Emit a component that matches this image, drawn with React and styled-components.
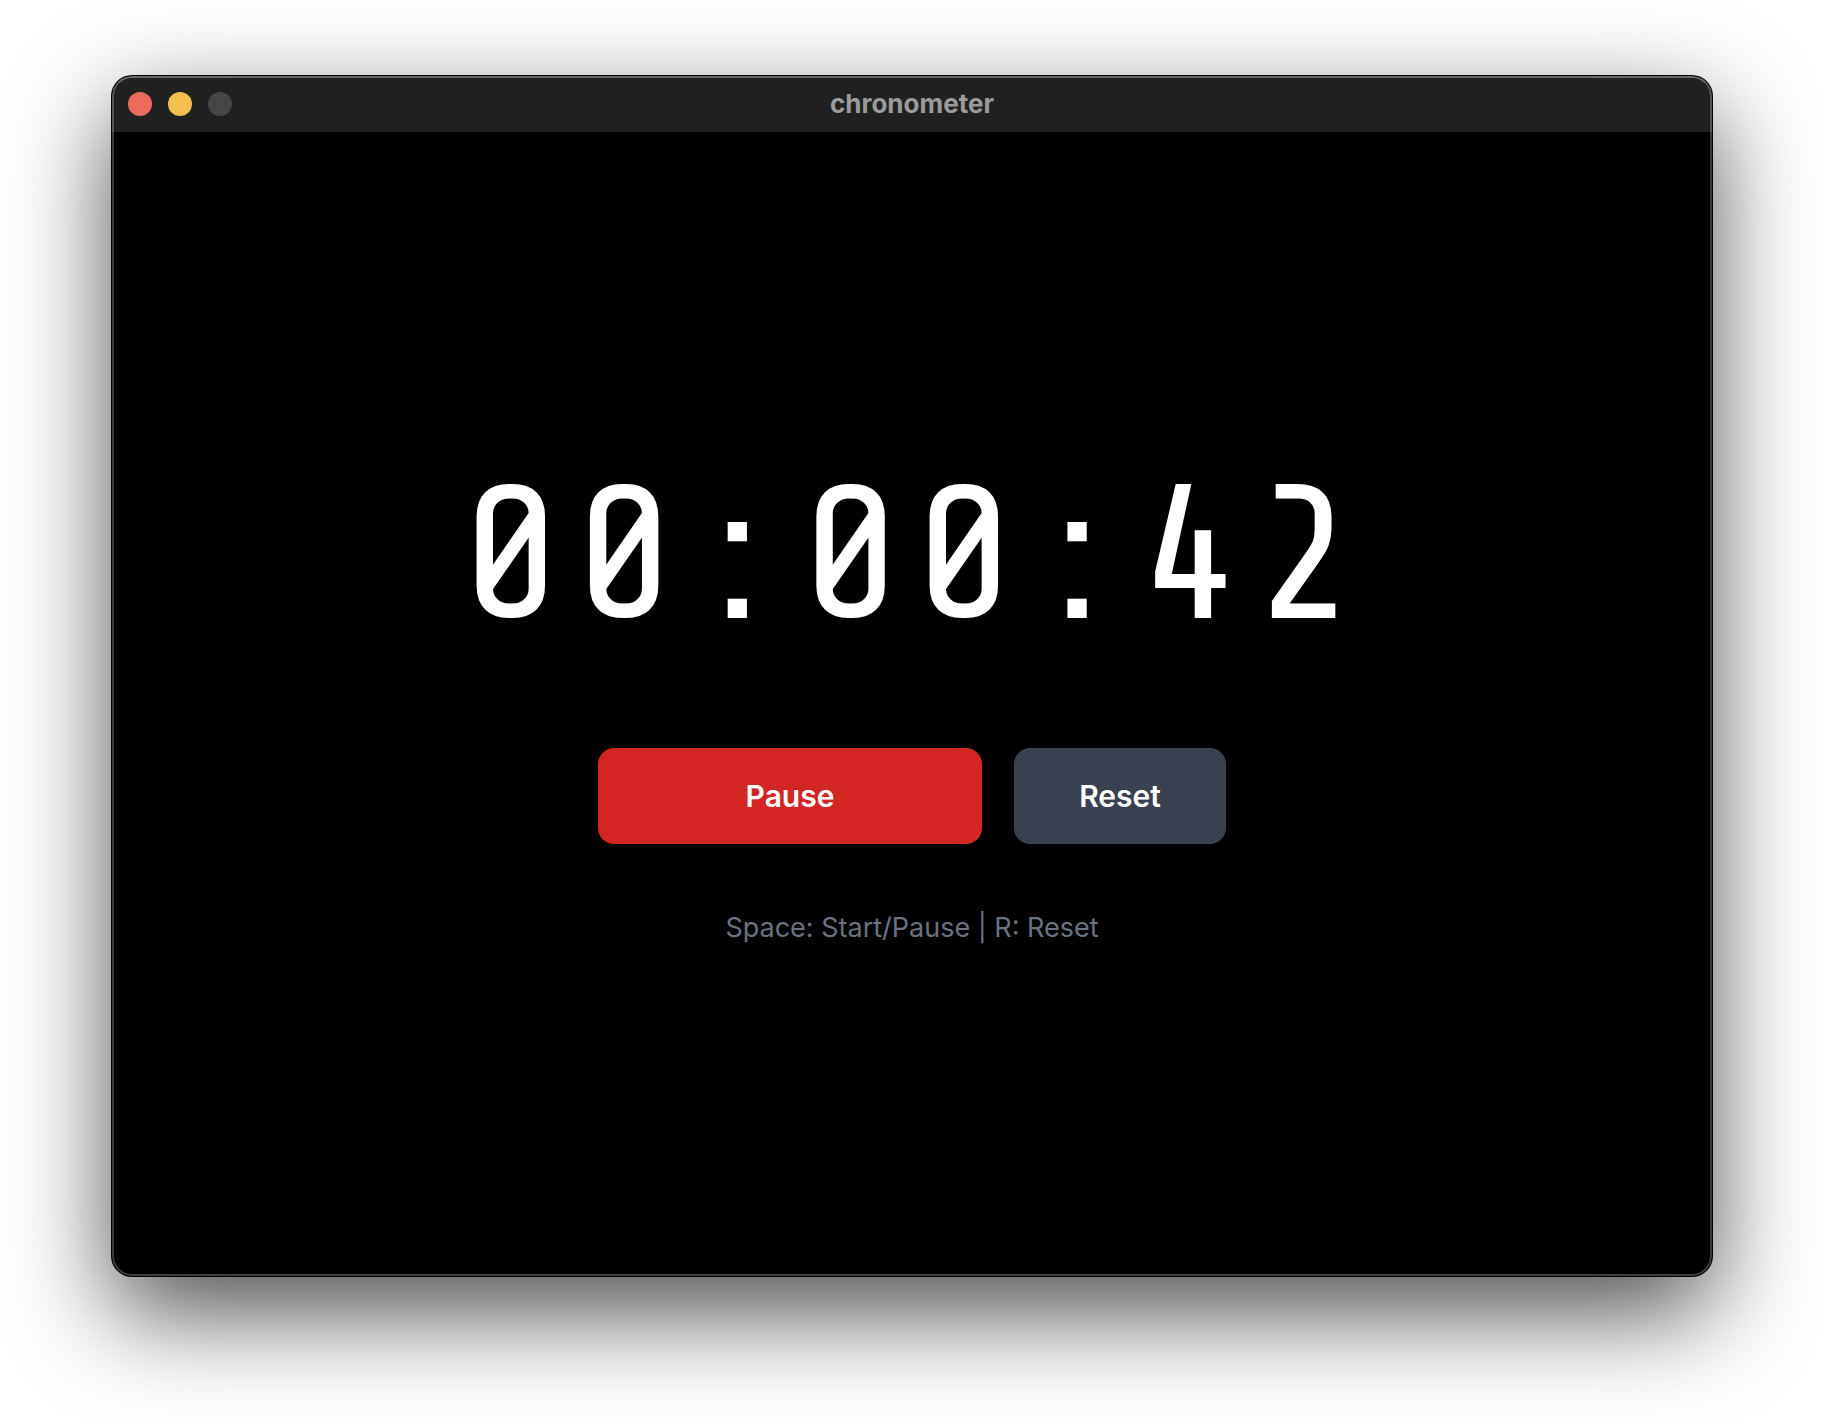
import React, { useCallback, useEffect, useState } from "react";
import styled, { createGlobalStyle } from "styled-components";

const GlobalStyle = createGlobalStyle`
  *, *::before, *::after {
    box-sizing: border-box;
  }

  body {
    margin: 0;
    background: #ffffff;
    font-family: Inter, "Liberation Sans", sans-serif;
  }
`;

const Desktop = styled.div`
  display: flex;
  min-height: 100vh;
  padding: 76px 112px 148px;
  overflow: hidden;
`;

const AppWindow = styled.main`
  position: relative;
  display: flex;
  flex: 1;
  flex-direction: column;
  overflow: hidden;
  border-radius: 20px;
  background: #000000;
  box-shadow:
    0 0 0 1px #000000,
    0 36px 100px rgba(0, 0, 0, 0.7);

  &::after {
    position: absolute;
    inset: 0;
    border: 2px solid rgba(255, 255, 255, 0.24);
    border-top-color: rgba(255, 255, 255, 0.32);
    border-radius: inherit;
    content: "";
    pointer-events: none;
  }
`;

const TitleBar = styled.header`
  display: grid;
  grid-template-columns: 1fr auto 1fr;
  align-items: center;
  height: 56px;
  padding: 0 16px;
  background: #202020;
`;

const WindowControls = styled.div`
  display: flex;
  gap: 16px;
`;

const WindowControl = styled.button`
  width: 24px;
  height: 24px;
  padding: 0;
  border: 0;
  border-radius: 50%;
  background: ${({ $color }) => $color};
`;

const Title = styled.h1`
  margin: 0;
  color: #9b9b9b;
  font-size: 26px;
  font-weight: 700;
  line-height: 32px;
`;

const Content = styled.section`
  display: flex;
  flex: 1;
  flex-direction: column;
  align-items: center;
  justify-content: center;
`;

const Clock = styled.time`
  margin-bottom: 96px;
  color: #ffffff;
  font-family: "Share Tech Mono", "Liberation Mono", monospace;
  font-size: 192px;
  letter-spacing: 0.05em;
  line-height: 1;
  white-space: nowrap;
`;

const Actions = styled.div`
  display: flex;
  gap: 32px;
  margin-bottom: 64px;
`;

const ActionButton = styled.button`
  min-width: ${({ $wide }) => ($wide ? 384 : 212)}px;
  height: 96px;
  padding: 0 64px;
  border: 0;
  border-radius: 16px;
  background: ${({ $color }) => $color};
  color: #ffffff;
  font-family: inherit;
  font-size: 30px;
  font-weight: 600;
  line-height: 40px;
`;

const Hint = styled.p`
  margin: 0;
  color: #6b7280;
  font-size: 27px;
  line-height: 40px;
`;

const pad = (value) => String(value).padStart(2, "0");

const formatTime = (total) =>
  [Math.floor(total / 3600), Math.floor(total / 60) % 60, total % 60].map(pad).join(":");

export default function App() {
  const [seconds, setSeconds] = useState(42);
  const [paused, setPaused] = useState(false);

  const toggle = useCallback(() => setPaused((value) => !value), []);
  const reset = useCallback(() => setSeconds(0), []);

  useEffect(() => {
    const onKeyDown = (event) => {
      if (event.code === "Space") {
        event.preventDefault();
        toggle();
      } else if (event.key.toLowerCase() === "r") {
        reset();
      }
    };
    window.addEventListener("keydown", onKeyDown);
    return () => window.removeEventListener("keydown", onKeyDown);
  }, [toggle, reset]);

  return (
    <>
      <GlobalStyle />
      <Desktop>
        <AppWindow>
          <TitleBar>
            <WindowControls>
              <WindowControl type="button" aria-label="Close" $color="#ed6a5e" />
              <WindowControl type="button" aria-label="Minimize" $color="#f5bf4f" />
              <WindowControl type="button" aria-label="Zoom" $color="#464646" disabled />
            </WindowControls>
            <Title>chronometer</Title>
          </TitleBar>
          <Content>
            <Clock>{formatTime(seconds)}</Clock>
            <Actions>
              <ActionButton type="button" $wide $color={paused ? "#16a34a" : "#d32522"} onClick={toggle}>
                {paused ? "Start" : "Pause"}
              </ActionButton>
              <ActionButton type="button" $color="#394150" onClick={reset}>
                Reset
              </ActionButton>
            </Actions>
            <Hint>Space: Start/Pause | R: Reset</Hint>
          </Content>
        </AppWindow>
      </Desktop>
    </>
  );
}
